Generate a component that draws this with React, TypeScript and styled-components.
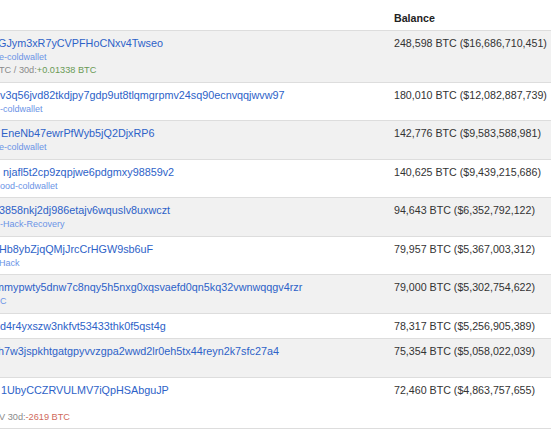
import React from "react";
import styled, { createGlobalStyle } from "styled-components";

const Global = createGlobalStyle`
  html, body { margin: 0; padding: 0; background: #ffffff; overflow: hidden; }
  body { font-family: "Liberation Sans", Arial, sans-serif; }
`;

const Page = styled.div`
  width: 551px;
  height: 431px;
  overflow: hidden;
  background: #ffffff;
`;

const Table = styled.table`
  border-collapse: collapse;
  width: 600px;
  table-layout: fixed;
  font-size: 10.67px;
  line-height: 13px;
  color: #333333;
`;

const AddrHead = styled.th`
  width: 382px;
  padding: 12px 6px 5px 0;
`;

const BalHead = styled.th`
  width: 200px;
  text-align: left;
  font-weight: bold;
  color: #222222;
  padding: 12px 6px 5px;
`;

const Row = styled.tr<{ $alt: boolean }>`
  background: ${(p) => (p.$alt ? "#f1f1f1" : "#ffffff")};
  border-top: 1px solid #dddddd;
  &:last-child { border-bottom: 1px solid #dddddd; }
`;

const AddrCell = styled.td`
  padding: 6px 6px 5.5px 0;
  vertical-align: top;
  white-space: nowrap;
  overflow: visible;
`;

const BalCell = styled.td`
  padding: 6px 6px 5.5px;
  vertical-align: top;
  white-space: nowrap;
  color: #333333;
`;

const Line = styled.div<{ $indent: number }>`
  margin-left: ${(p) => p.$indent}px;
  height: 13px;
`;

const Addr = styled.a`
  font-size: 10.8px;
  color: #2d62c8;
  text-decoration: none;
`;

const Label = styled.span`
  font-size: 9px;
  color: #6b93e6;
`;

const Change = styled.span`
  font-size: 9.2px;
  color: #8a8a8a;
`;

const Delta = styled.span<{ $up: boolean }>`
  color: ${(p) => (p.$up ? "#6a9a55" : "#cf6a5c")};
`;

type Entry = {
  addr: string;
  ai: number;
  label?: string;
  li?: number;
  extra?: { pre: string; delta: string; up: boolean; ei: number };
  gap?: boolean;
  balance: string;
};

const rows: Entry[] = [
  {
    addr: "GJym3xR7yCVPFHoCNxv4Twseo",
    ai: -2,
    label: "e-coldwallet",
    li: -1,
    extra: { pre: "TC / 30d:", delta: "+0.01338 BTC", up: true, ei: -1 },
    balance: "248,598 BTC ($16,686,710,451)",
  },
  {
    addr: "v3q56jvd82tkdjpy7gdp9ut8tlqmgrpmv24sq90ecnvqqjwvw97",
    ai: 0,
    label: "-coldwallet",
    li: 0,
    balance: "180,010 BTC ($12,082,887,739)",
  },
  {
    addr: "EneNb47ewrPfWyb5jQ2DjxRP6",
    ai: 1,
    label: "e-coldwallet",
    li: -1,
    balance: "142,776 BTC ($9,583,588,981)",
  },
  {
    addr: "njafl5t2cp9zqpjwe6pdgmxy98859v2",
    ai: 3,
    label: "ood-coldwallet",
    li: 0,
    balance: "140,625 BTC ($9,439,215,686)",
  },
  {
    addr: "3858nkj2dj986etajv6wquslv8uxwczt",
    ai: -1,
    label: "-Hack-Recovery",
    li: 0,
    balance: "94,643 BTC ($6,352,792,122)",
  },
  {
    addr: "Hb8ybZjqQMjJrcCrHGW9sb6uF",
    ai: -1,
    label: "Hack",
    li: -1,
    balance: "79,957 BTC ($5,367,003,312)",
  },
  {
    addr: "mmypwty5dnw7c8nqy5h5nxg0xqsvaefd0qn5kq32vwnwqqgv4rzr",
    ai: -5,
    label: "C",
    li: 0,
    balance: "79,000 BTC ($5,302,754,622)",
  },
  {
    addr: "d4r4yxszw3nkfvt53433thk0f5qst4g",
    ai: 0,
    balance: "78,317 BTC ($5,256,905,389)",
  },
  {
    addr: "h7w3jspkhtgatgpyvvzgpa2wwd2lr0eh5tx44reyn2k7sfc27a4",
    ai: -2,
    gap: true,
    balance: "75,354 BTC ($5,058,022,039)",
  },
  {
    addr: "1UbyCCZRVULMV7iQpHSAbguJP",
    ai: 1,
    gap: true,
    extra: { pre: "V 30d:", delta: "-2619 BTC", up: false, ei: -1 },
    balance: "72,460 BTC ($4,863,757,655)",
  },
];

export default function App() {
  return (
    <Page>
      <Global />
      <Table>
        <thead>
          <tr>
            <AddrHead></AddrHead>
            <BalHead>Balance</BalHead>
          </tr>
        </thead>
        <tbody>
          {rows.map((r, i) => (
            <Row key={r.addr} $alt={i % 2 === 0}>
              <AddrCell>
                <Line $indent={r.ai}>
                  <Addr href="#">{r.addr}</Addr>
                </Line>
                {r.label && (
                  <Line $indent={r.li ?? 0}>
                    <Label>{r.label}</Label>
                  </Line>
                )}
                {r.gap && <Line $indent={0}>{"\u00a0"}</Line>}
                {r.extra && (
                  <Line $indent={r.extra.ei}>
                    <Change>
                      {r.extra.pre}
                      <Delta $up={r.extra.up}>{r.extra.delta}</Delta>
                    </Change>
                  </Line>
                )}
              </AddrCell>
              <BalCell>{r.balance}</BalCell>
            </Row>
          ))}
        </tbody>
      </Table>
    </Page>
  );
}
